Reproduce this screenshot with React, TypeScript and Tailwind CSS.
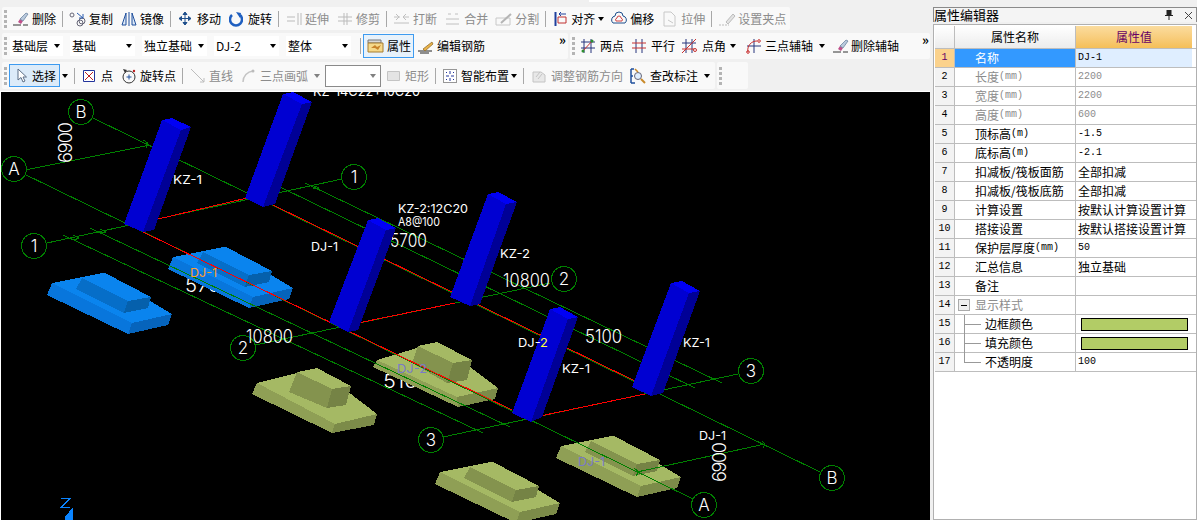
import React from "react";

const Svg = ({ w = 16, children }: { w?: number; children: React.ReactNode }) => (
  <svg width={w} height={16} viewBox={`0 0 ${w} 16`} fill="none" className="shrink-0">
    {children}
  </svg>
);

// toolbar icons
const Eraser = () => (
  <Svg w={17}>
    <path d="M1 14h8M11 14h5" stroke="#333" />
    <path d="M6 11l2-3 3 2-2 3z" fill="#c0508a" />
    <path d="M8 8l6-6 2 1-5 7z" fill="#b9c9dc" stroke="#5f7a99" strokeWidth=".7" />
  </Svg>
);
const CopyIcon = () => (
  <Svg w={18}>
    <circle cx="3" cy="4" r="2" stroke="#667" />
    <circle cx="11" cy="12" r="3" stroke="#667" />
    <circle cx="13" cy="10" r="3" stroke="#667" />
    <path d="M8 2l6 5M14 3v4h-4" stroke="#2a5db0" />
  </Svg>
);
const MirrorIcon = () => (
  <Svg>
    <path d="M5 2L1 14h4zM11 2l4 12h-4z" stroke="#1f4f9c" fill="#dce8f6" />
    <path d="M8 1v14" stroke="#1f4f9c" />
  </Svg>
);
const MoveIcon = () => (
  <Svg w={14}>
    <path d="M7 1v13M1 7.500h12M7 1L5 3.500h4zM7 14l-2-2.500h4zM1 7.500L3.500 5.500v4zM13 7.500L10.500 5.500v4z" stroke="#1f4f8c" fill="#1f4f8c" />
  </Svg>
);
const RotateIcon = () => (
  <Svg w={14}>
    <path d="M3 4a6 6 0 1 0 8 0" stroke="#1f5fc0" strokeWidth="2.500" />
    <path d="M7 1l5 1-1 5z" fill="#1f5fc0" />
  </Svg>
);
const Extend = () => (
  <Svg>
    <path d="M1 6h8M1 10h8M12 2v12M15 2v12" stroke="#bbb" />
  </Svg>
);
const Trim = () => (
  <Svg>
    <path d="M1 6h14M1 10h14M7 2v12M10 2v12" stroke="#bbb" />
  </Svg>
);
const BreakIcon = () => (
  <Svg w={17}>
    <path d="M1 6h6M10 6h6M1 12h15M3 3l3 3-3 3M13 3l-3 3 3 3" stroke="#c0c0c0" />
  </Svg>
);
const MergeIcon = () => (
  <Svg w={15}>
    <path d="M1 8h13M1 13h13M3 3h3M10 3h3" stroke="#c0c0c0" />
  </Svg>
);
const SplitIcon = () => (
  <Svg w={18}>
    <path d="M1 7h14v7H1z" stroke="#c8c8c8" />
    <path d="M6 12L16 3" stroke="#b5b5b5" strokeWidth="2" />
  </Svg>
);
const AlignIcon = () => (
  <Svg w={13}>
    <path d="M1.500 1v14" stroke="#1f3f9c" strokeWidth="2" />
    <path d="M4 6h8v6H4z" stroke="#c03030" />
    <path d="M12 3H5M7 1L5 3l2 2" stroke="#1f3f9c" />
  </Svg>
);
const Offset = () => (
  <Svg>
    <path d="M2 12a4 4 0 0 1 2-7 4 4 0 0 1 8 0 4 4 0 0 1 2 7z" stroke="#1f4f8c" />
    <path d="M5 10a2 2 0 0 1 1-3 2 2 0 0 1 4 0 2 2 0 0 1 1 3z" stroke="#d04040" />
  </Svg>
);
const Stretch = () => (
  <Svg w={15}>
    <path d="M2 1h7l4 4v10H2z" stroke="#c8c8c8" />
    <path d="M6 9l5 3" stroke="#c8c8c8" />
  </Svg>
);
const GripSet = () => (
  <Svg w={18}>
    <path d="M1 14h10" stroke="#bbb" strokeDasharray="2 1" />
    <path d="M8 11l7-8 2 2-7 8z" fill="#e3e3e3" stroke="#bbb" />
  </Svg>
);
const Prop = () => (
  <Svg w={17}>
    <path d="M1 2h13v3H1z" fill="#d9d9d9" stroke="#777" />
    <path d="M1 5h15v9H1z" fill="#f6d98a" stroke="#a67c30" />
    <path d="M4 10l4-3 2 2 4-2-3 5-3-2z" fill="#c9832a" />
  </Svg>
);
const Pencil = () => (
  <Svg w={17}>
    <path d="M1 13h14M3 15h9" stroke="#222" />
    <path d="M6 11l9-7 1 2-8 7z" fill="#e9b24a" stroke="#8a6420" strokeWidth=".7" />
  </Svg>
);
const TwoPoint = () => (
  <Svg>
    <path d="M4 1v14M11 1v14M1 10h14M1 4h14" stroke="#26347c" />
    <path d="M2 14L13 2" stroke="#c83030" />
    <circle cx="3" cy="13" r="1.500" fill="#2f8f2f" />
    <circle cx="12" cy="3" r="1.500" fill="#2f8f2f" />
  </Svg>
);
const Parallel = () => (
  <Svg w={14}>
    <path d="M4 1v14M10 1v14" stroke="#26347c" />
    <path d="M0 5h14M0 10h14" stroke="#c83030" />
  </Svg>
);
const PointAngle = () => (
  <Svg>
    <path d="M4 1v14M10 1v14M0 5h14" stroke="#26347c" />
    <path d="M0 15L14 1M0 11h12" stroke="#c83030" />
    <circle cx="13" cy="12" r="1.500" stroke="#c83030" />
  </Svg>
);
const ThreePoint = () => (
  <Svg>
    <path d="M8 1v14M1 8h14" stroke="#26347c" />
    <path d="M2 14a9 9 0 0 1 9-11" stroke="#c83030" />
    <circle cx="2" cy="14" r="1.300" stroke="#c83030" />
    <circle cx="13" cy="3" r="1.300" stroke="#c83030" />
  </Svg>
);
const Cursor = () => (
  <Svg w={14}>
    <path d="M4 1v11l3-2.500 2 4.500 2-1-2-4h3.500z" fill="#fff" stroke="#5d6f87" />
  </Svg>
);
const PointIcon = () => (
  <Svg w={12}>
    <path d="M.5 2.500h11v11H.5z" fill="#fff" stroke="#23349c" />
    <path d="M2 4l8 8M10 4l-8 8" stroke="#c02020" />
  </Svg>
);
const RotPoint = () => (
  <Svg>
    <circle cx="8" cy="9" r="6" stroke="#333" />
    <path d="M5.500 9h5M8 6.500v5" stroke="#1f4f9c" />
    <path d="M2 1l4 1-2 3z" fill="#333" />
    <circle cx="13" cy="3" r="1.200" fill="#c02020" />
  </Svg>
);
const LineIcon = () => (
  <Svg w={15}>
    <path d="M1 1l13 13M10 14h4v-4" stroke="#bdbdbd" />
  </Svg>
);
const ArcIcon = () => (
  <Svg w={14}>
    <path d="M2 14a11 11 0 0 1 10-11" stroke="#c4c4c4" strokeWidth="1.500" />
    <circle cx="12" cy="3" r="1.500" fill="#bbb" />
  </Svg>
);
const RectIcon = () => (
  <Svg w={15}>
    <path d="M1.500 3.500h12v9h-12z" fill="#e4e4e4" stroke="#c4c4c4" />
  </Svg>
);
const Smart = () => (
  <Svg w={14}>
    <path d="M.5 1.500h13v13H.5z" fill="#fff" stroke="#333" strokeDasharray="1 1" />
    <path d="M7 3v3M7 10v3M3 8h3M8 8h3M3 4l1 1M10 4l1 1M3 12l1-1M10 12l1-1" stroke="#23349c" />
  </Svg>
);
const Rebar = () => (
  <Svg>
    <path d="M2 4h8l4 3v7H2z" fill="#e8e8e8" stroke="#c4c4c4" />
    <path d="M5 9l4-5M7 11l4-5" stroke="#c4c4c4" />
  </Svg>
);
const Search = () => (
  <Svg>
    <path d="M1 1h3M1 8h2M1 15h4M1 1v14" stroke="#1f4f9c" strokeWidth="1.500" />
    <circle cx="8" cy="8" r="3.500" fill="#dfeeff" stroke="#667" />
    <path d="M11 11l4 4" stroke="#c98a2a" strokeWidth="2" />
    <path d="M5 1l3 3" stroke="#c98a2a" strokeWidth="1.500" />
  </Svg>
);

const Grip = () => (
  <div className="mx-[2px] flex w-[3px] shrink-0 flex-col gap-[2px]">
    {[0, 1, 2, 3].map((i) => (
      <span key={i} className="h-[3px] w-[3px] bg-[#b4b4b4]" />
    ))}
  </div>
);
const Sep = () => <span className="mx-[6px] h-[16px] w-px shrink-0 bg-[#a8a8a8]" />;
const Caret = ({ off, cls = "" }: { off?: boolean; cls?: string }) => (
  <span
    className={`h-0 w-0 shrink-0 border-x-[3.500px] border-t-[4px] border-x-transparent ${
      off ? "border-t-[#808080]" : "border-t-black"
    } ${cls}`}
  />
);

const Tool = ({
  icon,
  label,
  off,
  gap = "gap-[3px]",
  cls = "",
}: {
  icon: React.ReactNode;
  label: string;
  off?: boolean;
  gap?: string;
  cls?: string;
}) => (
  <div className={`flex shrink-0 items-center ${gap} ${off ? "text-[#8c8c8c]" : "text-black"} ${cls}`}>
    {icon}
    <span className="whitespace-nowrap">{label}</span>
  </div>
);

const Combo = ({ label, w }: { label: string; w: string }) => (
  <div className={`flex h-[20px] shrink-0 items-center justify-between bg-white pl-[2px] pr-[3px] ${w}`}>
    <span className="whitespace-nowrap text-[12px]">{label}</span>
    <Caret />
  </div>
);

const Toolbar1 = () => (
  <div className="ml-[2px] flex h-[23px] w-[788px] items-center rounded-[2px] bg-[#f9f9f9]">
    <Grip />
    <div className="ml-[3px] flex items-center">
      <Tool icon={<Eraser />} label="删除" />
      <Sep />
      <Tool icon={<CopyIcon />} label="复制" gap="gap-[2px]" />
      <Tool icon={<MirrorIcon />} label="镜像" cls="ml-[8px]" />
      <Sep />
      <Tool icon={<MoveIcon />} label="移动" gap="gap-[5px]" cls="ml-px" />
      <Tool icon={<RotateIcon />} label="旋转" gap="gap-[5px]" cls="ml-[8px]" />
      <Sep />
      <Tool icon={<Extend />} label="延伸" off cls="ml-px" />
      <Tool icon={<Trim />} label="修剪" off cls="ml-[8px]" />
      <Sep />
      <Tool icon={<BreakIcon />} label="打断" off />
      <Tool icon={<MergeIcon />} label="合并" off gap="gap-[4px]" cls="ml-[8px]" />
      <Tool icon={<SplitIcon />} label="分割" off gap="gap-[2px]" cls="ml-[7px]" />
      <Sep />
      <Tool icon={<AlignIcon />} label="对齐" gap="gap-[4px]" cls="ml-[2px]" />
      <Caret cls="ml-[3px]" />
      <Tool icon={<Offset />} label="偏移" cls="ml-[7px]" />
      <Tool icon={<Stretch />} label="拉伸" off gap="gap-[4px]" cls="ml-[8px]" />
      <Sep />
      <Tool icon={<GripSet />} label="设置夹点" off gap="gap-[2px]" />
    </div>
  </div>
);

const Toolbar2 = () => (
  <div className="mt-[3px] ml-[2px] flex h-[26px] items-center">
    <div className="relative flex h-full w-[566px] items-center rounded-[2px] bg-[#f9f9f9]">
      <Grip />
      <div className="ml-px flex items-center gap-[7px]">
        <Combo label="基础层" w="w-[53px]" />
        <Combo label="基础" w="w-[65px]" />
        <Combo label="独立基础" w="w-[65px]" />
        <Combo label="DJ-2" w="w-[65px]" />
        <Combo label="整体" w="w-[65px]" />
      </div>
      <span className="ml-[9px] h-[16px] w-px bg-[#a8a8a8]" />
      <div className="ml-[2px] flex h-[24px] w-[51px] shrink-0 items-center gap-[3px] border border-[#3d9bf0] bg-[#e8f2fb] pl-[3px]">
        <Prop />
        <span className="whitespace-nowrap">属性</span>
      </div>
      <Tool icon={<Pencil />} label="编辑钢筋" gap="gap-[3px]" cls="ml-[3px]" />
      <span className="absolute right-[2px] top-px text-[13px] font-bold leading-[12px]">»</span>
    </div>
    <div className="relative ml-[2px] flex h-full w-[360px] items-center rounded-[2px] bg-[#f9f9f9]">
      <Grip />
      <Tool icon={<TwoPoint />} label="两点" gap="gap-[4px]" cls="ml-[3px]" />
      <Tool icon={<Parallel />} label="平行" gap="gap-[5px]" cls="ml-[8px]" />
      <Tool icon={<PointAngle />} label="点角" gap="gap-[4px]" cls="ml-[7px]" />
      <Caret cls="ml-[4px]" />
      <Tool icon={<ThreePoint />} label="三点辅轴" gap="gap-[3px]" cls="ml-[10px]" />
      <Caret cls="ml-[6px]" />
      <Tool icon={<Eraser />} label="删除辅轴" gap="gap-[2px]" cls="ml-[7px]" />
      <span className="absolute right-[1px] top-px text-[13px] font-bold leading-[12px]">»</span>
    </div>
  </div>
);

const Toolbar3 = () => (
  <div className="mt-[3px] ml-[2px] flex h-[27px] items-center">
    <div className="flex h-full w-[713px] items-center rounded-[2px] bg-[#f9f9f9]">
      <Grip />
      <div className="flex h-[23px] w-[51px] shrink-0 items-center gap-[4px] border border-[#3d9bf0] bg-[#dcebf9] pl-[4px]">
        <Cursor />
        <span className="whitespace-nowrap">选择</span>
      </div>
      <Caret cls="ml-[2px]" />
      <Sep />
      <Tool icon={<PointIcon />} label="点" gap="gap-[6px]" cls="ml-[2px]" />
      <Tool icon={<RotPoint />} label="旋转点" cls="ml-[8px]" />
      <Sep />
      <Tool icon={<LineIcon />} label="直线" off gap="gap-[4px]" cls="ml-px" />
      <Tool icon={<ArcIcon />} label="三点画弧" off gap="gap-[5px]" cls="ml-[8px]" />
      <Caret off cls="ml-[6px]" />
      <div className="ml-[5px] flex h-[22px] w-[56px] shrink-0 items-center justify-end border border-[#8a8a8a] bg-white pr-[4px]">
        <Caret off />
      </div>
      <Tool icon={<RectIcon />} label="矩形" off gap="gap-[4px]" cls="ml-[5px]" />
      <Sep />
      <Tool icon={<Smart />} label="智能布置" gap="gap-[4px]" cls="ml-px" />
      <Caret cls="ml-[2px]" />
      <Sep />
      <Tool icon={<Rebar />} label="调整钢筋方向" off gap="gap-[4px]" cls="ml-px" />
      <Tool icon={<Search />} label="查改标注" gap="gap-[4px]" cls="ml-[7px]" />
      <Caret cls="ml-[6px]" />
    </div>
    <div className="ml-[2px] flex h-full w-[31px] items-center rounded-[2px] bg-[#f9f9f9]">
      <Grip />
    </div>
  </div>
);

type Pt = [number, number];
const pts = (a: Pt[], dx = 0, dy = 0) => a.map(([x, y]) => `${x + dx},${y + dy}`).join(" ");

const Column = ({ cap, front, right }: { cap: Pt[]; front: Pt[]; right: Pt[] }) => (
  <g>
    <polygon points={pts(front)} fill="#0000d2" />
    <polygon points={pts(right)} fill="#000096" />
    <polygon points={pts(cap)} fill="#0000f5" />
  </g>
);

// x/y of a column: four cap corners, then three bottom corners
const col = (c: Pt[], b: Pt[]) => (
  <Column
    cap={c}
    front={[c[0], c[3], b[1], b[0]]}
    right={[c[3], c[2], b[2], b[1]]}
  />
);

const Footing = ({
  dx,
  dy,
  shades,
}: {
  dx: number;
  dy: number;
  shades: [string, string, string, string, string];
}) => (
  <g>
    <polygon points={pts([[52, 283], [103, 273], [172, 314], [132, 323]], dx, dy)} fill={shades[0]} />
    <polygon points={pts([[52, 283], [132, 323], [128, 334], [47, 295]], dx, dy)} fill={shades[1]} />
    <polygon points={pts([[132, 323], [172, 314], [168, 325], [128, 334]], dx, dy)} fill={shades[2]} />
    <polygon points={pts([[82, 278], [105, 273], [151, 297], [128, 301]], dx, dy)} fill={shades[0]} />
    <polygon points={pts([[82, 278], [128, 301], [124, 313], [76, 289]], dx, dy)} fill={shades[3]} />
    <polygon points={pts([[128, 301], [151, 297], [148, 308], [124, 313]], dx, dy)} fill={shades[4]} />
  </g>
);

const BLUE: [string, string, string, string, string] = ["#0a84ee", "#0876dc", "#0664bc", "#066ec8", "#0560ac"];
const OLIVE: [string, string, string, string, string] = ["#a5b964", "#8f9f55", "#7c8b49", "#84934e", "#758345"];

const TallFooting = ({ base, ped }: { base: Pt[]; ped: Pt[] }) => (
  <g>
    <polygon points={pts([base[0], ped[1], base[1], base[2]])} fill={OLIVE[0]} />
    <polygon points={pts([base[0], base[2], base[3], base[4]])} fill={OLIVE[1]} />
    <polygon points={pts([base[2], base[1], base[5], base[3]])} fill={OLIVE[2]} />
    <polygon points={pts([ped[0], ped[3], ped[5], ped[4]])} fill={OLIVE[3]} />
    <polygon points={pts([ped[3], ped[2], ped[6], ped[5]])} fill={OLIVE[4]} />
    <polygon points={pts([ped[0], ped[1], ped[2], ped[3]])} fill={OLIVE[0]} />
  </g>
);

const greens: [number, number, number, number][] = [
  [20, 172, 693, 499],
  [93, 118, 820, 472],
  [63, 235, 483, 433],
  [90, 228, 510, 427],
  [305, 183, 722, 383],
  [280, 187, 695, 388],
  [47, 243, 342, 179],
  [255, 345, 550, 283],
  [443, 437, 738, 374],
  [25, 170, 150, 145],
  [637, 472, 765, 444],
];
const reds: [number, number, number, number][] = [
  [154, 220, 247, 198],
  [143, 232, 512, 410],
  [273, 205, 635, 381],
  [358, 323, 455, 303],
  [540, 416, 645, 394],
];
const circles: [number, number, string][] = [
  [81, 112, "B"],
  [14, 169, "A"],
  [34, 246, "1"],
  [354, 177, "1"],
  [564, 279, "2"],
  [243, 348, "2"],
  [751, 371, "3"],
  [431, 440, "3"],
  [704, 505, "A"],
  [832, 478, "B"],
];

const canvasFont = "Inter, 'Liberation Sans', sans-serif";

const Label = ({
  x,
  y,
  size = 12,
  fill = "#fff",
  children,
  w,
}: {
  x: number;
  y: number;
  size?: number;
  fill?: string;
  children: React.ReactNode;
  w?: number;
}) => (
  <text
    x={x}
    y={y}
    fontSize={size}
    fontWeight={size > 16 ? 300 : 400}
    fill={fill}
    textLength={w}
    lengthAdjust="spacingAndGlyphs"
    fontFamily={canvasFont}
  >
    {children}
  </text>
);

const Canvas = () => (
  <div className="h-[429px] w-[930px] border-l border-t border-white bg-black">
    <svg width={929} height={428} viewBox="1 92 929 428" className="block" shapeRendering="crispEdges">
      {/* dimension text sits under the footings */}
      <Label x={185} y={292} size={19} w={48}>5700</Label>
      <Label x={383} y={388} size={19} w={48}>5100</Label>

      <Footing dx={0} dy={0} shades={BLUE} />
      <Footing dx={121} dy={-26} shades={BLUE} />
      <TallFooting
        base={[[257, 383], [377, 414], [335, 424], [332, 433], [252, 394], [374, 425]]}
        ped={[[297, 372], [317, 368], [351, 386], [332, 389], [289, 392], [327, 408], [346, 405]]}
      />
      <TallFooting
        base={[[377, 360], [498, 388], [457, 397], [458, 407], [373, 367], [495, 399]]}
        ped={[[418, 346], [437, 342], [472, 360], [453, 363], [412, 363], [447, 383], [467, 380]]}
      />
      <Footing dx={388} dy={189} shades={OLIVE} />
      <Footing dx={509} dy={163} shades={OLIVE} />

      {greens.map(([a, b, c, d], i) => (
        <line key={i} x1={a} y1={b} x2={c} y2={d} stroke="#008000" />
      ))}
      {reds.map(([a, b, c, d], i) => (
        <line key={i} x1={a} y1={b} x2={c} y2={d} stroke="#ff0000" />
      ))}
      {/* dimension arrow ticks */}
      <path d="M143 140l5 3-2 5M634 468l5 4-3 4M762 441l3 3-2 4M100 229l6 3-5 1M73 235l6 3-5 2M312 185l7 3-6 1" stroke="#008000" fill="none" />

      {col([[162, 120], [172, 118], [191, 127], [181, 130]], [[124, 224], [143, 232], [154, 230]])}
      {col([[283, 94], [293, 92], [312, 102], [302, 104]], [[245, 198], [263, 207], [275, 204]])}
      <Label x={390} y={247} size={19} w={37}>5700</Label>
      {col([[368, 220], [378, 218], [396, 228], [386, 230]], [[329, 322], [348, 332], [358, 330]])}
      {col([[488, 194], [498, 192], [517, 202], [506, 204]], [[450, 297], [470, 306], [480, 304]])}
      {col([[550, 309], [560, 307], [578, 317], [568, 319]], [[512, 413], [531, 422], [542, 417]])}
      {col([[671, 283], [682, 281], [700, 291], [689, 293]], [[632, 387], [651, 396], [663, 393]])}

      {circles.map(([x, y, t], i) => (
        <g key={i}>
          <circle cx={x} cy={y} r={12.500} fill={i === 5 ? "none" : "#000"} stroke="#008000" />
          <text x={x} y={y + 6} fontSize={17} fontWeight={300} fill="#fff" textAnchor="middle" fontFamily={canvasFont}>
            {t}
          </text>
        </g>
      ))}

      <Label x={313} y={96} size={13} w={107}>KZ-14C22+10C20</Label>
      <Label x={173} y={184} w={29}>KZ-1</Label>
      <Label x={398} y={213} w={70}>KZ-2:12C20</Label>
      <Label x={398} y={226} w={42}>A8@100</Label>
      <Label x={311} y={251} w={27}>DJ-1</Label>
      <Label x={500} y={258} w={30}>KZ-2</Label>
      <Label x={503} y={287} size={18} w={47}>10800</Label>
      <Label x={585} y={343} size={18} w={37}>5100</Label>
      <Label x={246} y={343} size={18} w={47}>10800</Label>
      <Label x={562} y={373} w={28}>KZ-1</Label>
      <Label x={518} y={347} w={30}>
        DJ-<tspan fill="#ffff40">2</tspan>
      </Label>
      <Label x={683} y={347} w={27}>KZ-1</Label>
      <Label x={699} y={440} w={27}>DJ-1</Label>
      <Label x={190} y={277} fill="#ff9f30" w={27}>DJ-1</Label>
      <Label x={397} y={373} fill="#7a7ac8" w={30}>DJ-2</Label>
      <Label x={578} y={466} fill="#7a7ac8" w={27}>DJ-1</Label>

      <text transform="translate(72 163) rotate(-90)" fontSize={18} fontWeight={300} fill="#fff" fontFamily={canvasFont} textLength={41}>
        6900
      </text>
      <text transform="translate(726 482) rotate(-90)" fontSize={18} fontWeight={300} fill="#fff" fontFamily={canvasFont} textLength={40}>
        6900
      </text>

      {/* z axis */}
      <path d="M61 498.500h9L61 507.500h9" stroke="#0a84ff" fill="none" />
      <polygon points="73,507 65,517 65,520 73,520" fill="#0a84ff" />
    </svg>
  </div>
);

type Row = {
  name: string;
  unit?: string;
  value?: string;
  cjk?: boolean;
  off?: boolean;
  indent?: boolean;
  swatch?: boolean;
  group?: boolean;
};

const rows: Row[] = [
  { name: "名称", value: "DJ-1" },
  { name: "长度", unit: "(mm)", value: "2200", off: true },
  { name: "宽度", unit: "(mm)", value: "2200", off: true },
  { name: "高度", unit: "(mm)", value: "600", off: true },
  { name: "顶标高", unit: "(m)", value: "-1.5" },
  { name: "底标高", unit: "(m)", value: "-2.1" },
  { name: "扣减板/筏板面筋", value: "全部扣减", cjk: true },
  { name: "扣减板/筏板底筋", value: "全部扣减", cjk: true },
  { name: "计算设置", value: "按默认计算设置计算", cjk: true },
  { name: "搭接设置", value: "按默认搭接设置计算", cjk: true },
  { name: "保护层厚度", unit: "(mm)", value: "50" },
  { name: "汇总信息", value: "独立基础", cjk: true },
  { name: "备注" },
  { name: "显示样式", group: true },
  { name: "边框颜色", indent: true, swatch: true },
  { name: "填充颜色", indent: true, swatch: true },
  { name: "不透明度", indent: true, value: "100" },
];

const mono = "font-['Liberation_Mono',monospace] text-[10px]";

const PropertyRow = ({ row, index }: { row: Row; index: number }) => {
  const selected = index === 0;
  const grey = row.off || row.group;
  return (
    <div className="flex h-[19px] border-b border-[#bdbdbd]">
      <div
        className={`flex w-[20px] items-center justify-center border-r border-[#bdbdbd] ${mono} ${
          selected ? "bg-[#fbd28c] text-[#660066]" : "bg-[#f3f3f3] text-black"
        }`}
      >
        {index + 1}
      </div>
      <div
        className={`relative flex w-[121px] items-center whitespace-nowrap border-r border-[#bdbdbd] ${
          row.indent ? "pl-[30px]" : "pl-[20px]"
        } ${selected ? "bg-[#3399ff] text-white" : grey ? "text-[#8c8c8c]" : "text-black"}`}
      >
        {row.group && (
          <span className="absolute left-[3px] top-[3px] flex h-[12px] w-[12px] items-center justify-center border border-[#aaa] bg-[#eee]">
            <span className="h-px w-[6px] bg-black" />
          </span>
        )}
        {row.indent && (
          <>
            <span className={`absolute left-[9px] top-0 w-px bg-[#999] ${index === 16 ? "h-[10px]" : "h-[19px]"}`} />
            <span className="absolute left-[9px] top-[9px] h-px w-[17px] bg-[#999]" />
          </>
        )}
        <span>{row.name}</span>
        {row.unit && <span className={mono}>{row.unit}</span>}
      </div>
      <div
        className={`flex w-[116px] items-center whitespace-nowrap pl-[2px] ${selected ? "bg-[#dfeeff]" : ""} ${
          row.off ? "text-[#8c8c8c]" : "text-black"
        }`}
      >
        {row.swatch ? (
          <span className="ml-[3px] h-[13px] w-[107px] border border-black bg-[#b2cc66]" />
        ) : (
          <span className={row.cjk ? "" : mono}>{row.value}</span>
        )}
      </div>
    </div>
  );
};

const PropertyPanel = () => (
  <div className="flex w-[267px] flex-col bg-[#f0f0f0] pl-[3px] pt-[7px]">
    <div className="flex h-[15px] items-center justify-between border border-b-0 border-[#8a8a8a] bg-[#f4f4f4] pr-[3px] text-[13px] leading-[14px]">
      <span>属性编辑器</span>
      <div className="flex items-center gap-[11px]">
        <svg width="8" height="10" viewBox="0 0 8 10">
          <path d="M1.500 0h5v5h1.500v1H4.500v4h-1V6H0V5h1.500z" fill="#222" />
        </svg>
        <svg width="9" height="9" viewBox="0 0 9 9">
          <path d="M1 1l7 7M8 1L1 8" stroke="#444" fill="none" />
        </svg>
      </div>
    </div>
    <div className="mt-[2px] flex flex-1 flex-col border border-[#b0b0b0] bg-white pl-px pt-px">
      <div className="flex h-[23px] border-b border-[#bdbdbd]">
        <div className="w-[20px] border-r border-[#bdbdbd] bg-gradient-to-b from-white to-[#ececec]" />
        <div className="flex w-[121px] items-center justify-center border-r border-[#bdbdbd] bg-gradient-to-b from-white to-[#ececec]">
          属性名称
        </div>
        <div className="flex w-[116px] items-center justify-center bg-gradient-to-b from-[#fbdc9e] to-[#f5bf58] text-[#660066]">
          属性值
        </div>
      </div>
      {rows.map((row, i) => (
        <PropertyRow key={i} row={row} index={i} />
      ))}
    </div>
  </div>
);

export default function App() {
  return (
    <div className="flex h-[520px] w-[1197px] overflow-hidden bg-[#f0f0f0] font-['Noto_Sans_CJK_SC','Liberation_Sans',sans-serif] text-[12px] leading-none">
      <div className="flex w-[930px] flex-col">
        <div className="h-[91px] overflow-hidden">
          <div className="ml-[589px] h-[2px] w-[61px] bg-white" />
          <div className="pt-[5px]">
            <Toolbar1 />
            <Toolbar2 />
            <Toolbar3 />
          </div>
        </div>
        <Canvas />
      </div>
      <PropertyPanel />
    </div>
  );
}
